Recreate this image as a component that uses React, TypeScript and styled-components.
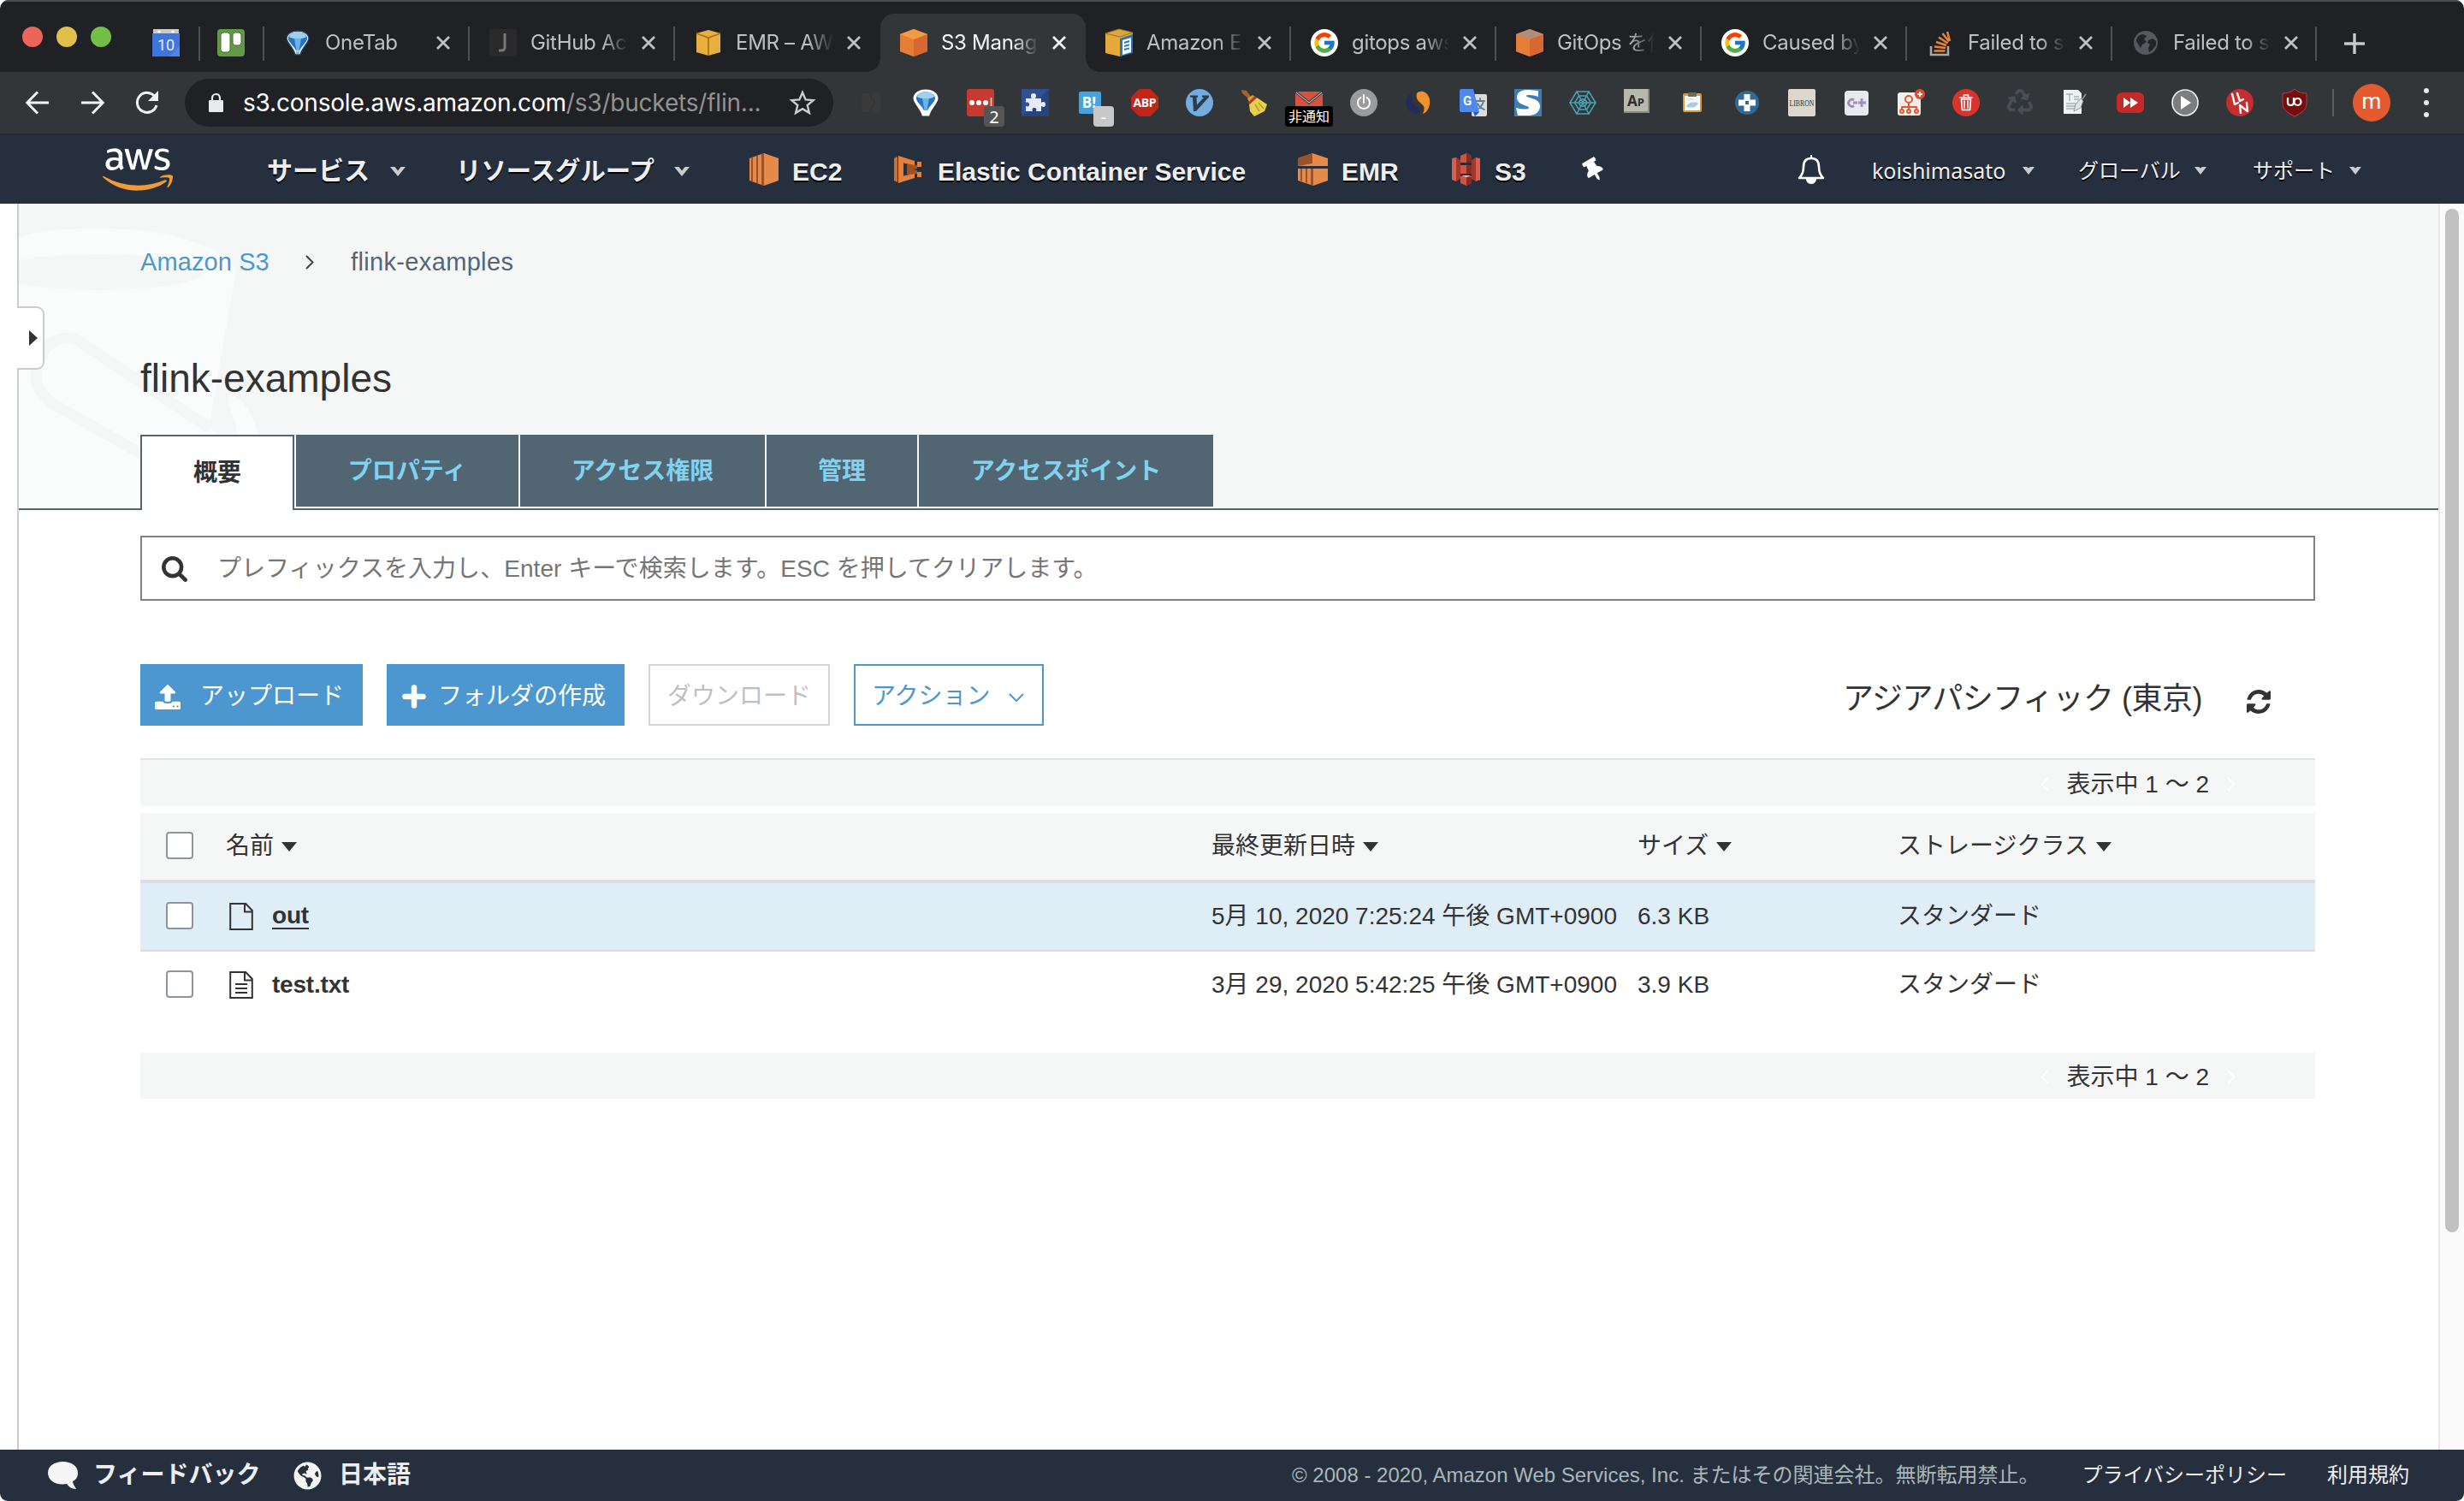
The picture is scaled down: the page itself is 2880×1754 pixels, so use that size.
import React from 'react';
import styled, { createGlobalStyle, css } from 'styled-components';
import { FaAws, FaThumbtack, FaRecycle, FaGlobeAmericas } from 'react-icons/fa';
import { FcGoogle } from 'react-icons/fc';

const sans = '"Liberation Sans", "Noto Sans CJK JP", sans-serif';
const ui = 'Inter, "Noto Sans CJK JP", sans-serif';
const humanist = '"Noto Sans", "Noto Sans CJK JP", sans-serif';

const GlobalStyle = createGlobalStyle`
  *, *::before, *::after { box-sizing: border-box; }
  body { margin: 0; background: #fff; font-family: ${sans}; color: #333; }
  svg { display: block; flex: none; overflow: visible; }
`;

const Window = styled.div`
  width: 2880px;
  height: 1754px;
  display: flex;
  flex-direction: column;
  overflow: hidden;
  border-radius: 10px 10px 9px 9px;
  background: #fff;
`;

/* ---------- tab strip ---------- */

const TabStrip = styled.div`
  height: 84px;
  flex: none;
  display: flex;
  align-items: flex-end;
  background: #202124;
  border-top: 2px solid #4c4d50;
`;

const Lights = styled.div`
  display: flex;
  gap: 16px;
  width: 158px;
  height: 68px;
  padding: 15px 0 0 26px;
`;

const Light = styled.i<{ $color: string }>`
  width: 24px;
  height: 24px;
  border-radius: 50%;
  background: ${(p) => p.$color};
`;

const divider = css`
  &::after {
    content: '';
    position: absolute;
    right: 0;
    top: 15px;
    width: 2px;
    height: 40px;
    background: #4d4f52;
  }
`;

const Pinned = styled.div<{ $width: number }>`
  position: relative;
  width: ${(p) => p.$width}px;
  height: 68px;
  padding: 18px 0 0 20px;
  ${divider}
`;

const Tab = styled.div<{ $active?: boolean; $line?: boolean; $width?: number }>`
  position: relative;
  display: flex;
  width: ${(p) => p.$width ?? 240}px;
  height: 68px;
  padding: 18px 0 0 23px;
  color: ${(p) => (p.$active ? '#f1f3f4' : '#bdc1c6')};
  ${(p) => p.$line && divider}
  ${(p) =>
    p.$active &&
    css`
      background: #323639;
      border-radius: 16px 16px 0 0;
      &::before,
      &::after {
        content: '';
        position: absolute;
        bottom: 0;
        width: 16px;
        height: 16px;
      }
      &::before {
        left: -16px;
        background: radial-gradient(circle at 0 0, transparent 15.5px, #323639 16px);
      }
      &::after {
        right: -16px;
        background: radial-gradient(circle at 100% 0, transparent 15.5px, #323639 16px);
      }
    `}
`;

const TabTitle = styled.span`
  width: 114px;
  margin-left: 16px;
  overflow: hidden;
  white-space: nowrap;
  font: 400 24px/32px ${ui};
  letter-spacing: -0.3px;
  mask-image: linear-gradient(90deg, #000 74%, transparent 100%);
`;

const TabClose = styled.span`
  margin: 8px 0 0 16px;
`;

const NewTab = styled.div`
  padding: 0 0 21px 32px;
`;

/* ---------- toolbar ---------- */

const Toolbar = styled.div`
  height: 74px;
  flex: none;
  display: flex;
  align-items: center;
  background: #323639;
  border-bottom: 2px solid #27282b;
`;

const NavButtons = styled.div`
  display: flex;
  align-items: center;
  gap: 36px;
  width: 216px;
  padding-left: 30px;
`;

const Omnibox = styled.div`
  display: flex;
  align-items: center;
  width: 758px;
  height: 56px;
  padding: 0 22px 0 28px;
  border-radius: 28px;
  background: #202124;
`;

const Url = styled.span`
  flex: 1;
  margin-left: 23px;
  font: 400 28px/56px ${ui};
  letter-spacing: -0.2px;
  color: #909294;
  white-space: nowrap;
  b { font-weight: 400; color: #fff; }
`;

const Extensions = styled.div`
  display: flex;
  gap: 32px;
  margin-left: 28px;
`;

const Ext = styled.span`
  position: relative;
  width: 32px;
  height: 32px;
`;

const Badge = styled.span<{ $bg: string; $wide?: boolean }>`
  position: absolute;
  left: ${(p) => (p.$wide ? -12 : 20)}px;
  top: 20px;
  width: ${(p) => (p.$wide ? 56 : 24)}px;
  height: 24px;
  border-radius: 4px;
  background: ${(p) => p.$bg};
  color: #fff;
  text-align: center;
  white-space: nowrap;
  font: 400 ${(p) => (p.$wide ? 16 : 20)}px/25px ${humanist};
`;

const ToolbarRule = styled.i`
  width: 2px;
  height: 32px;
  margin-left: 28px;
  background: #5b5e61;
`;

const Avatar = styled.span`
  width: 44px;
  height: 44px;
  margin-left: 22px;
  border-radius: 50%;
  background: #e45b2f;
  color: #fff;
  text-align: center;
  font: 400 26px/41px Roboto, ${sans};
`;

const Kebab = styled.span`
  display: grid;
  gap: 4px;
  margin-left: 39px;
  i { width: 6px; height: 6px; border-radius: 50%; background: #e8eaed; margin: 2px 0; }
`;

/* ---------- AWS navigation ---------- */

const AwsNav = styled.nav`
  height: 80px;
  flex: none;
  display: flex;
  background: #252f3e;
`;

const LogoSlot = styled.span`
  width: 312px;
  padding: 7px 0 0 120px;
`;

const AwsLogo = styled(FaAws)`
  width: 82px;
  height: 66px;
  fill: url(#aws);
`;

const NavItem = styled.span<{ $width: number }>`
  display: flex;
  align-items: center;
  flex: none;
  width: ${(p) => p.$width}px;
  height: 80px;
`;

const NavLabel = styled.span<{ $width?: number; $size?: number; $kind: 'kana' | 'latin' | 'user' | 'small' }>`
  width: ${(p) => (p.$width ? `${p.$width}px` : 'auto')};
  white-space: nowrap;
  color: #eee;
  text-shadow: 0 2px 0 #000;
  ${(p) => p.$kind === 'kana' && `font: 700 ${p.$size}px/40px ${sans}; padding-top: 4px;`}
  ${(p) => p.$kind === 'latin' && `font: 700 30px/40px ${sans}; padding-top: 6px;`}
  ${(p) => p.$kind === 'user' && `font: 400 25px/40px ${humanist}; padding-top: 2px;`}
  ${(p) => p.$kind === 'small' && `font: 400 24px/40px ${sans}; padding-top: 3px;`}
`;

const NavIcon = styled.span<{ $width: number }>`
  width: ${(p) => p.$width}px;
`;

const PinSlot = styled.span`
  margin: 5px 0 0 -2px;
`;

const CaretSlot = styled.span<{ $drop?: number }>`
  padding-top: ${(p) => p.$drop ?? 0}px;
`;

/* ---------- page ---------- */

const Main = styled.main`
  flex: 1;
  display: flex;
  min-height: 0;
`;

const Gutter = styled.aside`
  position: relative;
  width: 22px;
  border-right: 2px solid #ccc;
`;

const Drawer = styled.span`
  position: absolute;
  z-index: 2;
  left: 20px;
  top: 120px;
  width: 32px;
  height: 74px;
  padding: 26px 0 0 14px;
  background: #fff;
  border: 2px solid #ccc;
  border-left: 0;
  border-radius: 0 9px 9px 0;
`;

const Page = styled.div`
  flex: 1;
  display: flex;
  flex-direction: column;
`;

const Header = styled.header`
  position: relative;
  height: 358px;
  flex: none;
  display: flex;
  flex-direction: column;
  padding-left: 142px;
  background: #f5f7f7;
  border-bottom: 2px solid #526573;
`;

const Watermark = styled.svg`
  position: absolute;
  left: 0;
  top: 0;
  overflow: hidden;
`;

const Crumbs = styled.div`
  position: relative;
  display: flex;
  align-items: center;
  height: 36px;
  margin-top: 50px;
  font-size: 29px;
  line-height: 36px;
  color: #546574;
  a { color: #4d97d0; width: 193px; letter-spacing: 0.1px; }
  svg { margin-right: 43px; }
  span { letter-spacing: 0.35px; }
`;

const Title = styled.h1`
  position: relative;
  margin: 90px 0 0;
  font-size: 46px;
  line-height: 56px;
  font-weight: 400;
  color: #333;
`;

const PageTabs = styled.div`
  position: relative;
  display: flex;
  gap: 2px;
  width: max-content;
  height: 88px;
  margin: auto 0 -2px;
  &::after {
    content: '';
    position: absolute;
    left: 182px;
    right: 0;
    bottom: 2px;
    height: 2px;
    background: #fff;
  }
`;

const PageTab = styled.div<{ $width: number; $active?: boolean }>`
  width: ${(p) => p.$width}px;
  height: ${(p) => (p.$active ? 88 : 84)}px;
  text-align: center;
  font-size: 28px;
  font-weight: 700;
  line-height: 85px;
  ${(p) =>
    p.$active
      ? 'background: #fff; color: #333; border: 2px solid #526573; border-bottom: 0;'
      : 'background: #526573; color: #80d3ef;'}
`;

const Content = styled.section`
  display: flex;
  flex-direction: column;
  width: 2542px;
  margin: 30px 0 0 142px;
`;

const Search = styled.div`
  display: flex;
  align-items: center;
  height: 76px;
  padding-left: 23px;
  border: 2px solid #808080;
  color: #757575;
  font-size: 28px;
  line-height: 40px;
  svg { margin-top: 2px; }
  span { margin: 1px 0 0 35px; letter-spacing: 0.05px; }
`;

const Actions = styled.div`
  display: flex;
  align-items: center;
  gap: 28px;
  height: 72px;
  margin-top: 74px;
`;

const Button = styled.button<{ $tone: 'solid' | 'disabled' | 'outline'; $width: number }>`
  display: flex;
  align-items: center;
  width: ${(p) => p.$width}px;
  height: 72px;
  padding: 4px 0 0 20px;
  font: 400 28px/40px ${sans};
  white-space: nowrap;
  border: 2px solid #4d97d0;
  ${(p) => p.$tone === 'solid' && 'background: #4d97d0; color: #fff; padding-left: 15px;'}
  ${(p) => p.$tone === 'disabled' && 'background: #fff; color: #bfbfbf; border-color: #d5d5d5;'}
  ${(p) => p.$tone === 'outline' && 'background: #fff; color: #4d97d0; padding-left: 19px;'}
`;

const ButtonIcon = styled.span<{ $width: number }>`
  display: flex;
  align-items: center;
  width: ${(p) => p.$width}px;
`;

const Region = styled.span`
  margin-left: auto;
  margin-right: 52px;
  padding-top: 10px;
  font-size: 36px;
  line-height: 48px;
  letter-spacing: -0.5px;
`;

const RefreshSlot = styled.span`
  margin: 16px 52px 0 -28px;
`;

const Pager = styled.div<{ $top?: boolean }>`
  display: flex;
  align-items: center;
  justify-content: flex-end;
  height: ${(p) => (p.$top ? 56 : 54)}px;
  padding: 3px 93px 0 0;
  background: #f5f7f7;
  border-top: ${(p) => (p.$top ? '2px solid #e1e3e3' : '0')};
  margin-top: ${(p) => (p.$top ? 38 : 40)}px;
  font-size: 28px;
  line-height: 40px;
  span { margin: 0 21px 0 21px; }
`;

const Row = styled.div<{ $kind: 'head' | 'selected' | 'plain' }>`
  display: grid;
  grid-template-columns: 100px 1152px 498px 304px 1fr;
  align-items: center;
  font-size: 28px;
  line-height: 40px;
  white-space: nowrap;
  height: ${(p) => ({ head: 82, selected: 80, plain: 78 })[p.$kind]}px;
  ${(p) => p.$kind === 'head' && 'margin-top: 8px; background: #f5f7f7; border-bottom: 4px solid #ddd;'}
  ${(p) => p.$kind === 'selected' && 'background: #dfedf7; border-bottom: 2px solid #ddd;'}
`;

const Cell = styled.span<{ $lift?: number; $indent?: number }>`
  display: flex;
  align-items: center;
  margin-top: -${(p) => p.$lift ?? 0}px;
  padding-left: ${(p) => p.$indent ?? 0}px;
`;

const Sortable = styled(Cell)`
  gap: 9px;
  margin-top: 0;
`;

const Checkbox = styled.span`
  width: 32px;
  height: 32px;
  margin: -2px 0 0 30px;
  border: 2px solid #8f9499;
  border-radius: 4px;
  background: #fff;
`;

const FileName = styled.b<{ $underline?: boolean }>`
  margin-left: 22px;
  letter-spacing: -0.2px;
  ${(p) => p.$underline && 'border-bottom: 2px solid #333; line-height: 28px;'}
`;

const ScrollTrack = styled.div`
  width: 30px;
  flex: none;
  padding: 6px 0 0 6px;
  background: #fafafa;
  border-left: 2px solid #e8e8e8;
`;

const ScrollThumb = styled.div`
  width: 16px;
  height: 1196px;
  border-radius: 8px;
  background: #c1c1c1;
`;

const Footer = styled.footer`
  height: 60px;
  flex: none;
  display: flex;
  align-items: center;
  background: #252f3e;
  color: #eee;
  font-size: 24px;
  line-height: 40px;
  padding: 0 64px 0 56px;
  white-space: nowrap;
`;

const FooterStrong = styled.b<{ $width: number }>`
  width: ${(p) => p.$width}px;
  font-size: 28px;
`;

const FooterIcon = styled.span<{ $width: number }>`
  width: ${(p) => p.$width}px;
`;

const Copyright = styled.span`
  margin-left: auto;
  margin-right: 50px;
  color: #aab7b8;
`;

const FooterLink = styled.span`
  margin-right: 47px;
  &:last-child { margin-right: 0; }
`;

/* ---------- drawings ---------- */

const Svg = ({ s = 32, w, h, vb = '0 0 32 32', children }: any) => (
  <svg width={w ?? s} height={h ?? s} viewBox={vb}>
    {children}
  </svg>
);

const NavCaret = ({ small }: { small?: boolean }) =>
  small ? (
    <Svg w={14} h={9} vb="0 0 14 9"><path d="M0 0h5l2 1.500L9 0h5L7 9z" fill="#ccc" /></Svg>
  ) : (
    <Svg w={18} h={11} vb="0 0 18 11"><path d="M0 0h5.500L9 4.500 12.500 0H18L9 11z" fill="#ccc" /></Svg>
  );

const Cube = ({ pale }: { pale?: boolean }) => (
  <Svg>
    <path d="M16 0L32 6v20L16 32 0 26V6z" fill="#e8833a" />
    <path d="M0 6L16 12v20L0 26z" fill="#e57f35" />
    <path d="M32 6L16 12v20l16-6z" fill="#da6630" />
    <path d="M16 0L32 6 16 12 0 6z" fill={pale ? '#b28d78' : '#f09b45'} />
  </Svg>
);

const YellowCube = () => (
  <Svg>
    <path d="M16 1l14 4v22l-14 4-14-4V5z" fill="#e8b13f" />
    <path d="M2 5l14 5 14-5M16 10v21" fill="none" stroke="#a9741c" strokeWidth="1.8" />
  </Svg>
);

const DocCube = () => (
  <Svg>
    <path d="M16 0l16 4v23l-15 5L0 28V5z" fill="#e3a93a" />
    <path d="M16 0l16 4-15 5L0 5z" fill="#d8a742" stroke="#9b6f1d" />
    <path d="M17 11l15-5v22l-15 4z" fill="#2b76b5" />
    <path d="M20 13l10-3v17l-10 3z" fill="#fff" />
    <path d="M22 16l6-2M22 20l6-1.6M22 24l6-1.6" stroke="#2b76b5" strokeWidth="2" />
  </Svg>
);

const Balloon = ({ outline }: { outline?: boolean }) => (
  <Svg>
    <path
      d="M16 2C8 2 3 6 3 11c0 5 8 11 10 19h6c2-8 10-14 10-19 0-5-5-9-13-9z"
      fill={outline ? '#fff' : '#dfeefa'}
      stroke={outline ? '#fff' : '#27394a'}
      strokeWidth={outline ? 3 : 1.4}
    />
    <path d="M5 11c0-5 5-7.500 11-7.500S27 6 27 11c0 4-6 8-9 14h-4C11 19 5 15 5 11z" fill="#2574c4" />
    <path d="M6 9c1-4 5-5.500 10-5.500S25 5 26 9c-3 3-17 3-20 0z" fill="#9fd0f2" />
    <path d="M12 11h8l-2.500 14h-3z" fill="#6cb2ea" />
    <path d="M14 26h4v3h-4z" fill={outline ? '#fff' : '#8fb7d6'} />
  </Svg>
);

const Calendar = () => (
  <Svg>
    <path d="M0 5h32v27H0z" fill="#4986ee" />
    <path d="M0 5h32v14L20 32H0z" fill="#3767d1" opacity=".55" />
    <path d="M1 0h30v5H1z" fill="#c9cacc" />
    <circle cx="8" cy="3" r="1.600" fill="#fff" />
    <circle cx="24" cy="3" r="1.600" fill="#fff" />
    <text x="16" y="25" fontSize="18" textAnchor="middle" fill="#e8eefc" fontFamily="Roboto">10</text>
  </Svg>
);

const Trello = () => (
  <Svg>
    <rect width="32" height="32" rx="4" fill="#629a45" />
    <rect x="4" y="4" width="11" height="23" rx="3" fill="#fff" stroke="#43702d" />
    <rect x="18" y="4" width="10" height="15" rx="3" fill="#fff" stroke="#43702d" />
  </Svg>
);

const Google = () => (
  <Svg>
    <circle cx="16" cy="16" r="16" fill="#fff" />
    <FcGoogle x="2" y="2" size={28} />
  </Svg>
);

const Jenkins = () => (
  <Svg>
    <rect width="32" height="32" fill="#2a2a2b" />
    <path d="M18 5v16q0 4-4 4h-3" fill="none" stroke="#777" strokeWidth="3" />
  </Svg>
);

const StackOverflow = () => (
  <Svg>
    <path d="M5 20v10h20V20" fill="none" stroke="#a5a9ad" strokeWidth="2.600" />
    <path d="M8.500 25.500h13M9 20.500l13 1.500M11 15l12 4M14 9.500l10.500 7M18.500 5l7.500 9.500M24 3l3 11" stroke="#e5833d" strokeWidth="2.600" />
  </Svg>
);

const DimGlobe = () => (
  <Svg>
    <circle cx="16" cy="16" r="14" fill="#55585c" />
    <path d="M5 14c0-5 4-8 8-8l4 2-3 4 3 3-5 3-2 4zM19 13l5-2 4 3v5l-5 6-3 2-1-5 2-4-3-2z" fill="#232427" />
  </Svg>
);

const S2 = { fill: 'none', strokeLinecap: 'round', strokeLinejoin: 'round' } as const;

const extensionIcons: React.ReactNode[] = [
  <Svg>
    <rect x="5" y="5" width="22" height="22" rx="2" fill="#3b3a3a" />
    <path d="M16 5v5c5 1 6 10 0 12v5" fill="none" stroke="#333537" strokeWidth="1.500" />
  </Svg>,
  <Balloon outline />,
  <>
    <Svg>
      <rect width="32" height="32" rx="3" fill="#c53b32" />
      <circle cx="6" cy="16" r="3" fill="#fff" />
      <circle cx="14" cy="16" r="3" fill="#fff" />
      <circle cx="22" cy="16" r="3" fill="#fff" />
      <path d="M28.500 10v12" stroke="#f3c9c6" strokeWidth="1.600" />
    </Svg>
    <Badge $bg="#555">2</Badge>
  </>,
  <Svg>
    <rect width="32" height="32" fill="#32508f" />
    <path d="M0 32L32 0v32z" fill="#27447f" />
    <path d="M5 11h7c-2-3-1-6 2-6s4 3 2 6h7v5c3-2 5-1 5 2s-2 4-5 2v6h-6c1-3 0-4-2-4s-3 1-2 4H5v-6c3 1 4 0 4-2s-1-3-4-2z" fill="#e6ebf3" />
  </Svg>,
  <>
    <Svg>
      <rect x="3" y="3" width="26" height="26" rx="2" fill="#45a3df" />
      <text x="15" y="22" fontSize="17" fontWeight="700" textAnchor="middle" fill="#fff" fontFamily="Open Sans">B!</text>
    </Svg>
    <Badge $bg="#c8c8c8">-</Badge>
  </>,
  <Svg>
    <path d="M9.500 0h13L32 9.500v13L22.500 32h-13L0 22.500v-13z" fill="#c0271a" />
    <text x="16" y="21" fontSize="14" fontWeight="700" textAnchor="middle" fill="#fff" fontFamily="Open Sans" textLength="27">ABP</text>
  </Svg>,
  <Svg>
    <circle cx="16" cy="16" r="16" fill="#73ade0" />
    <path d="M5 7.500h9v2l-1.500.5.500 8.500L21 10l-2-.5v-2h8v2L12 26H9L8 10l-3-.5z" fill="#2d3c4c" />
  </Svg>,
  <Svg>
    <path d="M1 1l6 1 5 7-3 2-7-6z" fill="#a8632a" />
    <path d="M8 11l6-4 4 3-7 7z" fill="#d8992d" />
    <path d="M10 18l9-8 12 8-3 8-12 6-5-6z" fill="#e6d14a" />
    <path d="M9.500 17l8.500-8" stroke="#b8302a" strokeWidth="3" />
    <path d="M17 18l5 8M21 16l6 7" stroke="#b79a25" strokeWidth="1.500" />
  </Svg>,
  <>
    <Svg>
      <path d="M0 3h32v26H0z" fill="#d9513f" />
      <path d="M0 3l16 13L32 3" fill="none" stroke="#3a3d40" strokeWidth="3" />
      <path d="M1 4l15 12L31 4" fill="none" stroke="#ddd" strokeWidth="1" />
    </Svg>
    <Badge $bg="#000" $wide>非通知</Badge>
  </>,
  <Svg>
    <circle cx="16" cy="16" r="16" fill="#9b9b9b" />
    <path d="M16 7v9M12.500 10a7 7 0 1 0 7 0" {...S2} stroke="#fff" strokeWidth="2" />
  </Svg>,
  <Svg>
    <path d="M8 5C0 8-1 20 6 26c5 4 10 3 12 0-1-5-9-6-10-13-.5-3-.5-6 0-8z" fill="#1f2c5c" />
    <path d="M14 5c6-5 13-1 15 7 1 8-2 15-8 17 3-7 2-9-3-13-4-3-5-7-4-11z" fill="#f0912d" />
  </Svg>,
  <Svg>
    <rect x="14" y="6" width="18" height="26" rx="2" fill="#dcdcdc" />
    <path d="M19 14h10M24 11v3M28 14c-1 5-4 8-8 10M21 17c2 4 5 6 8 7" {...S2} stroke="#607d8b" strokeWidth="1.800" />
    <path d="M2 0h14l7 27H2q-2 0-2-2V2q0-2 2-2z" fill="#4f87ec" />
    <path d="M16 27h7l-5 5z" fill="#2b56c4" />
    <text x="9" y="18.500" fontSize="15" fontWeight="700" textAnchor="middle" fill="#fff" fontFamily="Roboto">G</text>
  </Svg>,
  <Svg>
    <rect width="32" height="32" fill="#3f7eb5" />
    <path d="M28 2v7c-5-2-14-3-14-1 0 3 16 2 16 12 0 9-9 11-14 11H4l-2-9c7 2 15 2 15 0 0-3-14-3-14-12C3 3 10 1 16 1z" fill="#fff" />
  </Svg>,
  <Svg>
    <g {...S2} stroke="#4aa3b3" strokeWidth="1.500">
      <path d="M9 3h14l8 13-8 13H9L1 16z" />
      <path d="M11.500 8h9l5 8-5 8h-9l-5-8z" />
      <path d="M13.500 12h5l2.500 4-2.500 4h-5L11 16zM1 16h30M9 3l14 26M23 3L9 29" />
    </g>
  </Svg>,
  <Svg>
    <rect width="30" height="28" fill="#b9b9b0" />
    <path d="M28 0h2v28H0v-2h28z" fill="#8b8b84" />
    <text x="14" y="20" fontSize="17" fontWeight="700" textAnchor="middle" fill="#2e2e2c" fontFamily="Open Sans">A<tspan fontSize="13">P</tspan></text>
  </Svg>,
  <Svg>
    <rect x="5" y="5" width="22" height="22" rx="2" fill="#d9993a" />
    <rect x="7" y="8" width="18" height="17" fill="#fafafa" />
    <rect x="11" y="4" width="10" height="5" rx="1" fill="#6c6f5c" />
    <path d="M10 12h7M10 19l4-3h8v2l-4 3h-8z" stroke="#b9cfe6" fill="#a3c9ee" />
  </Svg>,
  <Svg>
    <circle cx="16" cy="16" r="14" fill="#316a94" />
    <path d="M12.500 6h7v6.500H26v7h-6.500V26h-7v-6.500H6v-7h6.500z" fill="#fff" />
    <path d="M14 14h4v4h-4z" fill="#316a94" />
  </Svg>,
  <Svg>
    <rect width="32" height="32" rx="2" fill="#ddd8cd" />
    <text x="16" y="20" fontSize="11" textAnchor="middle" fill="#3a3632" fontFamily="Liberation Serif" textLength="29" lengthAdjust="spacingAndGlyphs">LIBRON</text>
  </Svg>,
  <Svg>
    <rect x="2" y="2" width="28" height="29" rx="4" fill="#e9e8ee" />
    <path d="M13 13a4 4 0 1 0 0 6.500M12 16h5M22 11v10M18 16h9" fill="none" stroke="#9d8fba" strokeWidth="2.800" />
  </Svg>,
  <Svg>
    <rect x="0" y="4" width="27" height="27" rx="3" fill="#f1efee" />
    <g {...S2} stroke="#e2592f" strokeWidth="2">
      <circle cx="13" cy="12" r="4" />
      <path d="M13 16v8M5 24v-3h17v3" />
      <circle cx="5" cy="26" r="2" />
      <circle cx="13" cy="26" r="2" />
      <circle cx="22" cy="26" r="2" />
    </g>
    <circle cx="26" cy="6" r="6" fill="#e8492b" />
    <path d="M26 3v6M23 6h6" stroke="#fff" strokeWidth="2" />
  </Svg>,
  <Svg>
    <circle cx="16" cy="16" r="16" fill="#d9332c" />
    <path d="M9 10h14M13.500 9.500V7h5v2.500M10.500 12l1 12.500h9l1-12.500zM14 14v8M18 14v8" {...S2} stroke="#fff" strokeWidth="1.700" />
  </Svg>,
  <FaRecycle size={30} color="#484e57" />,
  <Svg>
    <path d="M2 1h17l4 4v24H2z" fill="#eef4f2" />
    <path d="M5 6h8M9 6v8M14 9h6M14 12h6M5 17h14M5 20h12M5 23h10" stroke="#9fb3b3" strokeWidth="1.400" />
    <path d="M28 6L23 13" stroke="#999" strokeWidth="1.500" />
    <path d="M22 11l3 3-3 8-8 4 2-8z" fill="#dfe3e3" stroke="#777" strokeWidth=".7" />
  </Svg>,
  <Svg>
    <rect y="4" width="32" height="24" rx="6" fill="#c62a28" />
    <path d="M8 10l8 6-8 6zM16 10l9 6-9 6z" fill="#fff" />
  </Svg>,
  <Svg>
    <circle cx="16" cy="16" r="15" fill="#7d7d7d" stroke="#eee" strokeWidth="1.600" />
    <path d="M11 8l12 8-12 8z" fill="#fff" />
  </Svg>,
  <Svg>
    <circle cx="16" cy="16" r="16" fill="#c72c2e" />
    <path d="M7 6l3 12 4-2M13 5l3 9 4-2M17 28l-1-9 9 7-1-10" {...S2} stroke="#fff" strokeWidth="2.400" />
  </Svg>,
  <Svg>
    <path d="M16 0c4 4 9 5 14 5v12c0 7-6 11-14 15C8 28 2 24 2 17V5c5 0 10-1 14-5z" fill="#780d0e" stroke="#9b4a49" />
    <path d="M8 10v6q0 3 3.500 3t3.500-3v-6" fill="none" stroke="#fff" strokeWidth="2.200" />
    <circle cx="19.500" cy="15" r="4" fill="none" stroke="#fff" strokeWidth="2.200" />
  </Svg>,
];

const tabs: { title: string; icon: React.ReactNode; active?: boolean; line?: boolean; width?: number }[] = [
  { title: 'OneTab', icon: <Balloon />, line: true },
  { title: 'GitHub Act', icon: <Jenkins />, line: true },
  { title: 'EMR – AWS', icon: <YellowCube /> },
  { title: 'S3 Manage', icon: <Cube />, active: true },
  { title: 'Amazon EM', icon: <DocCube />, line: true },
  { title: 'gitops aws', icon: <Google />, line: true },
  { title: 'GitOps を使', icon: <Cube pale />, line: true },
  { title: 'Caused by', icon: <Google />, line: true },
  { title: 'Failed to st', icon: <StackOverflow />, line: true },
  { title: 'Failed to st', icon: <DimGlobe />, line: true, width: 239 },
];

const Ec2Icon = () => (
  <Svg w={34} h={38} vb="0 0 34 38">
    <path d="M17 0l17 6v26l-17 6L0 32V6z" fill="#e58a49" />
    <path d="M17 0v38l-3-1V1zM10 2v34l-2-1V3zM4 5v29l-2-1V5z" fill="#9a5226" />
  </Svg>
);

const EcsIcon = () => (
  <Svg w={33} h={32} vb="0 0 33 32">
    <path d="M0 3l4-2v30l-4-2z" fill="#c9702f" />
    <path d="M18 9l9 2v4l-4 1 4 1v4l-9 2-4-2V11z" fill="#9a5226" />
    <path d="M5 0l19 6v5l-11-2v14l11-2v5L5 32z" fill="#e5813c" />
    <path d="M11 8l4 3v10l-4 3z" fill="#252f3e" />
    <path d="M27 7h5v6h-5zM27 19h5v6h-5z" fill="#e5813c" />
  </Svg>
);

const EmrIcon = () => (
  <Svg w={35} h={38} vb="0 0 35 38">
    <path d="M17 0l18 6v9H0V6z" fill="#e58a49" />
    <path d="M17 0v12L0 15V6z" fill="#9a5226" />
    <path d="M0 18h35v14l-17 6L0 32z" fill="#e58a49" />
    <path d="M3 18h2v15l-2-1zM9 18h2v17l-2-1zM15 18h3v20l-3-1z" fill="#9a5226" />
  </Svg>
);

const S3Icon = () => (
  <Svg w={33} h={38} vb="0 0 33 38">
    <path d="M0 6l5-1v28l-5-2zM33 6l-5-1v28l5-2z" fill="#d8604a" />
    <path d="M5 5l5 3v22l-5 3zM28 5l-5 3v22l5 3z" fill="#a3372b" />
    <path d="M17 0l6 3v8H10V3zM10 14h13v10H10zM10 27h13v8l-6 3-7-3z" fill="#cf5543" />
    <path d="M17 0l6 3v8h-6zM17 14h6v10h-6zM17 28h6v7l-6 3z" fill="#8c2a22" />
    <path d="M11 26h11l-5 2z" fill="#f0c9c0" />
  </Svg>
);

const Close = ({ color }: { color: string }) => (
  <Svg s={16} vb="0 0 16 16">
    <path d="M1 1l14 14M15 1L1 15" stroke={color} strokeWidth="2.800" />
  </Svg>
);

const Chevron = ({ left, color }: { left?: boolean; color: string }) => (
  <Svg w={10} h={17} vb="0 0 10 17">
    <path d={left ? 'M9 1L1.500 8.500 9 16' : 'M1 1l7.500 7.500L1 16'} fill="none" stroke={color} strokeWidth="2" />
  </Svg>
);

const FileIcon = ({ lined }: { lined?: boolean }) => (
  <Svg w={28} h={32} vb="0 0 28 32">
    <path d="M1.200 1h18L26.800 9v22H1.200zM18 1v9.500h9" fill="none" stroke="#333" strokeWidth="2" />
    {lined && <path d="M7 15h14M7 20h14M7 25h14" stroke="#333" strokeWidth="2.200" />}
  </Svg>
);

const BucketWatermark = () => (
  <Watermark width="300" height="356" viewBox="22 238 300 356">
    <path d="M22 278C60 262 170 262 225 282c30 10 50 22 50 38L245 495c2 10 14 20 28 22 14-14-14-48-4-54 14-4 34 30 34 60 0 30-16 60-40 71H22z" fill="#fafcfb" />
    <ellipse cx="115" cy="318" rx="123" ry="21" fill="#f4f7f6" />
    <path d="M245 500L102 405c-20-18-48-10-56 16-10 26 0 36 14 50l110 62" fill="none" stroke="#f4f7f6" strokeWidth="13" />
  </Watermark>
);

const searchPath =
  'M1216 832q0-185-131.500-316.500t-316.500-131.500-316.500 131.500-131.500 316.500 131.500 316.500 316.500 131.500 316.500-131.500 131.500-316.500zm512 832q0 52-38 90t-90 38q-54 0-90-38l-343-342q-179 124-399 124-143 0-273.500-55.500t-225-150-150-225-55.500-273.500 55.500-273.500 150-225 225-150 273.500-55.500 273.500 55.500 225 150 150 225 55.500 273.500q0 220-124 399l343 343q37 37 37 90z';
const uploadPath =
  'M1344 1472q0-26-19-45t-45-19-45 19-19 45 19 45 45 19 45-19 19-45zm256 0q0-26-19-45t-45-19-45 19-19 45 19 45 45 19 45-19 19-45zm128-224v320q0 40-28 68t-68 28h-1472q-40 0-68-28t-28-68v-320q0-40 28-68t68-28h427q21 56 70.500 92t110.500 36h256q61 0 110.500-36t70.500-92h427q40 0 68 28t28 68zm-325-648q-17 40-59 40h-256v448q0 26-19 45t-45 19h-256q-26 0-45-19t-19-45v-448h-256q-42 0-59-40-17-39 14-69l448-448q18-19 45-19t45 19l448 448q31 30 14 69z';
const refreshPath =
  'M1639 1056q0 5-1 7-64 268-268 434.500t-478 166.500q-146 0-282.500-55t-243.500-157l-129 129q-19 19-45 19t-45-19-19-45v-448q0-26 19-45t45-19h448q26 0 45 19t19 45-19 45l-137 137q71 66 161 102t187 36q134 0 250-65t186-179q11-17 53-117 8-23 30-23h192q13 0 22.500 9.500t9.500 22.500zm25-800v448q0 26-19 45t-45 19h-448q-26 0-45-19t-19-45 19-45l138-138q-148-137-349-137-134 0-250 65t-186 179q-11 17-53 117-8 23-30 23h-199q-13 0-22.500-9.500t-9.500-22.500v-7q65-268 270-434.500t480-166.500q146 0 284 55.500t245 156.500l130-129q19-19 45-19t45 19 19 45z';

const PagerBar = ({ top }: { top?: boolean }) => (
  <Pager $top={top}>
    <Chevron left color="#fff" />
    <span>表示中 1 〜 2</span>
    <Chevron color="#fff" />
  </Pager>
);

const SortHeader = ({ children }: { children: React.ReactNode }) => (
  <Sortable>
    {children}
    <Svg w={18} h={11} vb="0 0 18 11"><path d="M0 0h18L9 11z" fill="#333" /></Svg>
  </Sortable>
);

const objects = [
  { name: 'out', date: '5月 10, 2020 7:25:24 午後 GMT+0900', size: '6.3 KB', storage: 'スタンダード', selected: true },
  { name: 'test.txt', date: '3月 29, 2020 5:42:25 午後 GMT+0900', size: '3.9 KB', storage: 'スタンダード', selected: false },
];

export default function App() {
  return (
    <Window>
      <GlobalStyle />
      <TabStrip>
        <Lights>
          <Light $color="#ec6559" />
          <Light $color="#e0c04c" />
          <Light $color="#71bf46" />
        </Lights>
        <Pinned $width={76}><Calendar /></Pinned>
        <Pinned $width={75}><Trello /></Pinned>
        {tabs.map((t, i) => (
          <Tab key={i} $active={t.active} $line={t.line} $width={t.width}>
            {t.icon}
            <TabTitle>{t.title}</TabTitle>
            <TabClose><Close color={t.active ? '#f1f3f4' : '#bdc1c6'} /></TabClose>
          </Tab>
        ))}
        <NewTab>
          <Svg s={24} vb="0 0 24 24">
            <path d="M12 0v24M0 12h24" stroke="#c6c9cd" strokeWidth="3.400" />
          </Svg>
        </NewTab>
      </TabStrip>

      <Toolbar>
        <NavButtons>
          <Svg s={28} vb="0 0 28 28">
            <path d="M14 1.500L1.800 14 14 26.500M2 14h25" fill="none" stroke="#f1f3f4" strokeWidth="3" />
          </Svg>
          <Svg s={28} vb="0 0 28 28">
            <path d="M14 1.500L26.200 14 14 26.500M26 14H1" fill="none" stroke="#f1f3f4" strokeWidth="3" />
          </Svg>
          <Svg s={28} vb="0 0 28 28">
            <path d="M23.500 7.500A11.500 11.500 0 1 0 25 17" fill="none" stroke="#f1f3f4" strokeWidth="3" />
            <path d="M27 0v12H15z" fill="#f1f3f4" />
          </Svg>
        </NavButtons>
        <Omnibox>
          <Svg w={17} h={22} vb="0 0 17 22">
            <path d="M1 8h15q1 0 1 1v12q0 1-1 1H1q-1 0-1-1V9q0-1 1-1z" fill="#e8eaed" />
            <path d="M4 9V5.500a4.500 4.500 0 0 1 9 0V9" fill="none" stroke="#e8eaed" strokeWidth="2.200" />
          </Svg>
          <Url><b>s3.console.aws.amazon.com</b>/s3/buckets/flin...</Url>
          <Svg s={28} vb="0 0 28 28">
            <path d="M14 2l3.600 8.400 9 .7-6.900 5.900 2.200 8.900L14 21.100l-7.900 4.800 2.200-8.900-6.900-5.900 9-.7z" fill="none" stroke="#c9ccd0" strokeWidth="2.400" />
          </Svg>
        </Omnibox>
        <Extensions>
          {extensionIcons.map((icon, i) => (
            <Ext key={i}>{icon}</Ext>
          ))}
        </Extensions>
        <ToolbarRule />
        <Avatar>m</Avatar>
        <Kebab><i /><i /><i /></Kebab>
      </Toolbar>

      <AwsNav>
        <svg width="0" height="0">
          <linearGradient id="aws" gradientUnits="userSpaceOnUse" x1="0" y1="0" x2="0" y2="512">
            <stop offset="0.575" stopColor="#fff" />
            <stop offset="0.575" stopColor="#f09b38" />
          </linearGradient>
        </svg>
        <LogoSlot>
          <AwsLogo />
        </LogoSlot>
        <NavItem $width={221}>
          <NavLabel $kind="kana" $size={30} $width={144}>サービス</NavLabel>
          <CaretSlot $drop={4}><NavCaret /></CaretSlot>
        </NavItem>
        <NavItem $width={343}>
          <NavLabel $kind="kana" $size={29.4} $width={255}>リソースグループ</NavLabel>
          <CaretSlot $drop={4}><NavCaret /></CaretSlot>
        </NavItem>
        <NavItem $width={169}>
          <NavIcon $width={50}><Ec2Icon /></NavIcon>
          <NavLabel $kind="latin">EC2</NavLabel>
        </NavItem>
        <NavItem $width={472}>
          <NavIcon $width={51}><EcsIcon /></NavIcon>
          <NavLabel $kind="latin">Elastic Container Service</NavLabel>
        </NavItem>
        <NavItem $width={180}>
          <NavIcon $width={51}><EmrIcon /></NavIcon>
          <NavLabel $kind="latin">EMR</NavLabel>
        </NavItem>
        <NavItem $width={151}>
          <NavIcon $width={50}><S3Icon /></NavIcon>
          <NavLabel $kind="latin">S3</NavLabel>
        </NavItem>
        <NavItem $width={253}>
          <PinSlot>
            <Svg w={28} h={28} vb="0 0 28 28">
              <g transform="rotate(-30 14 14)">
                <FaThumbtack x="4" y="0" size={27} color="#fff" />
              </g>
            </Svg>
          </PinSlot>
        </NavItem>
        <NavItem $width={87}>
          <Svg w={32} h={34} vb="0 0 32 34">
            <path d="M2 27c4-4 5-7 5-13 0-7 3-10 9-10s9 3 9 10c0 6 1 9 5 13z" fill="none" stroke="#fff" strokeWidth="2.600" strokeLinejoin="round" />
            <path d="M16 0v4M11 29h10q-1 4-5 4t-5-4z" fill="#fff" stroke="#fff" strokeWidth="2" />
          </Svg>
        </NavItem>
        <NavItem $width={241}>
          <NavLabel $kind="user" $width={176}>koishimasato</NavLabel>
          <CaretSlot $drop={2}><NavCaret small /></CaretSlot>
        </NavItem>
        <NavItem $width={204}>
          <NavLabel $kind="small" $width={136}>グローバル</NavLabel>
          <CaretSlot $drop={2}><NavCaret small /></CaretSlot>
        </NavItem>
        <NavItem $width={140}>
          <NavLabel $kind="small" $width={113}>サポート</NavLabel>
          <CaretSlot $drop={2}><NavCaret small /></CaretSlot>
        </NavItem>
      </AwsNav>

      <Main>
        <Gutter>
          <Drawer>
            <Svg w={10} h={18} vb="0 0 10 18"><path d="M0 0l10 9-10 9z" fill="#333" /></Svg>
          </Drawer>
        </Gutter>
        <Page>
          <Header>
            <BucketWatermark />
            <Crumbs>
              <a>Amazon S3</a>
              <Chevron color="#444" />
              <span>flink-examples</span>
            </Crumbs>
            <Title>flink-examples</Title>
            <PageTabs>
              <PageTab $width={180} $active>概要</PageTab>
              <PageTab $width={260}>プロパティ</PageTab>
              <PageTab $width={286}>アクセス権限</PageTab>
              <PageTab $width={176}>管理</PageTab>
              <PageTab $width={344}>アクセスポイント</PageTab>
            </PageTabs>
          </Header>

          <Content>
            <Search>
              <Svg s={30} vb="64 128 1664 1664"><path d={searchPath} fill="#333" /></Svg>
              <span>プレフィックスを入力し、Enter キーで検索します。ESC を押してクリアします。</span>
            </Search>
            <Actions>
              <Button $tone="solid" $width={260}>
                <ButtonIcon $width={53}>
                  <Svg w={30} h={29} vb="64 64 1664 1600"><path d={uploadPath} fill="#fff" /></Svg>
                </ButtonIcon>
                アップロード
              </Button>
              <Button $tone="solid" $width={278}>
                <ButtonIcon $width={43}>
                  <Svg w={30} h={26} vb="-2 0 30 26">
                    <path d="M13 2.500v21M2.500 13h21" stroke="#fff" strokeWidth="6.500" strokeLinecap="round" />
                  </Svg>
                </ButtonIcon>
                フォルダの作成
              </Button>
              <Button $tone="disabled" $width={212}>ダウンロード</Button>
              <Button $tone="outline" $width={222}>
                <ButtonIcon $width={160}>アクション</ButtonIcon>
                <Svg w={18} h={11} vb="0 0 18 11">
                  <path d="M1 2l8 8 8-8" fill="none" stroke="#4d97d0" strokeWidth="2" />
                </Svg>
              </Button>
              <Region>アジアパシフィック (東京)</Region>
              <RefreshSlot>
                <Svg s={28} vb="128 128 1536 1536"><path d={refreshPath} fill="#333" /></Svg>
              </RefreshSlot>
            </Actions>

            <PagerBar top />
            <Row $kind="head">
              <Checkbox />
              <SortHeader>名前</SortHeader>
              <SortHeader>最終更新日時</SortHeader>
              <SortHeader>サイズ</SortHeader>
              <SortHeader>ストレージクラス</SortHeader>
            </Row>
            {objects.map((o) => (
              <Row key={o.name} $kind={o.selected ? 'selected' : 'plain'}>
                <Checkbox />
                <Cell $indent={4}>
                  <FileIcon lined={!o.selected} />
                  <FileName $underline={o.selected}>{o.name}</FileName>
                </Cell>
                <Cell>{o.date}</Cell>
                <Cell>{o.size}</Cell>
                <Cell $lift={1}>{o.storage}</Cell>
              </Row>
            ))}
            <PagerBar />
          </Content>
        </Page>
        <ScrollTrack><ScrollThumb /></ScrollTrack>
      </Main>

      <Footer>
        <FooterIcon $width={53}>
          <Svg w={35} h={32} vb="0 0 35 32">
            <path d="M17.500 0C27 0 35 5 35 13c0 5-2 8-6 10 0 3 2 5 4 9-5 0-9-3-11-6C9 28 0 22 0 13 0 5 8 0 17.500 0z" fill="#f5f5f5" />
          </Svg>
        </FooterIcon>
        <FooterStrong $width={234}>フィードバック</FooterStrong>
        <FooterIcon $width={53}><FaGlobeAmericas size={33} color="#f5f5f5" /></FooterIcon>
        <FooterStrong $width={90}>日本語</FooterStrong>
        <Copyright>© 2008 - 2020, Amazon Web Services, Inc. またはその関連会社。無断転用禁止。</Copyright>
        <FooterLink>プライバシーポリシー</FooterLink>
        <FooterLink>利用規約</FooterLink>
      </Footer>
    </Window>
  );
}
